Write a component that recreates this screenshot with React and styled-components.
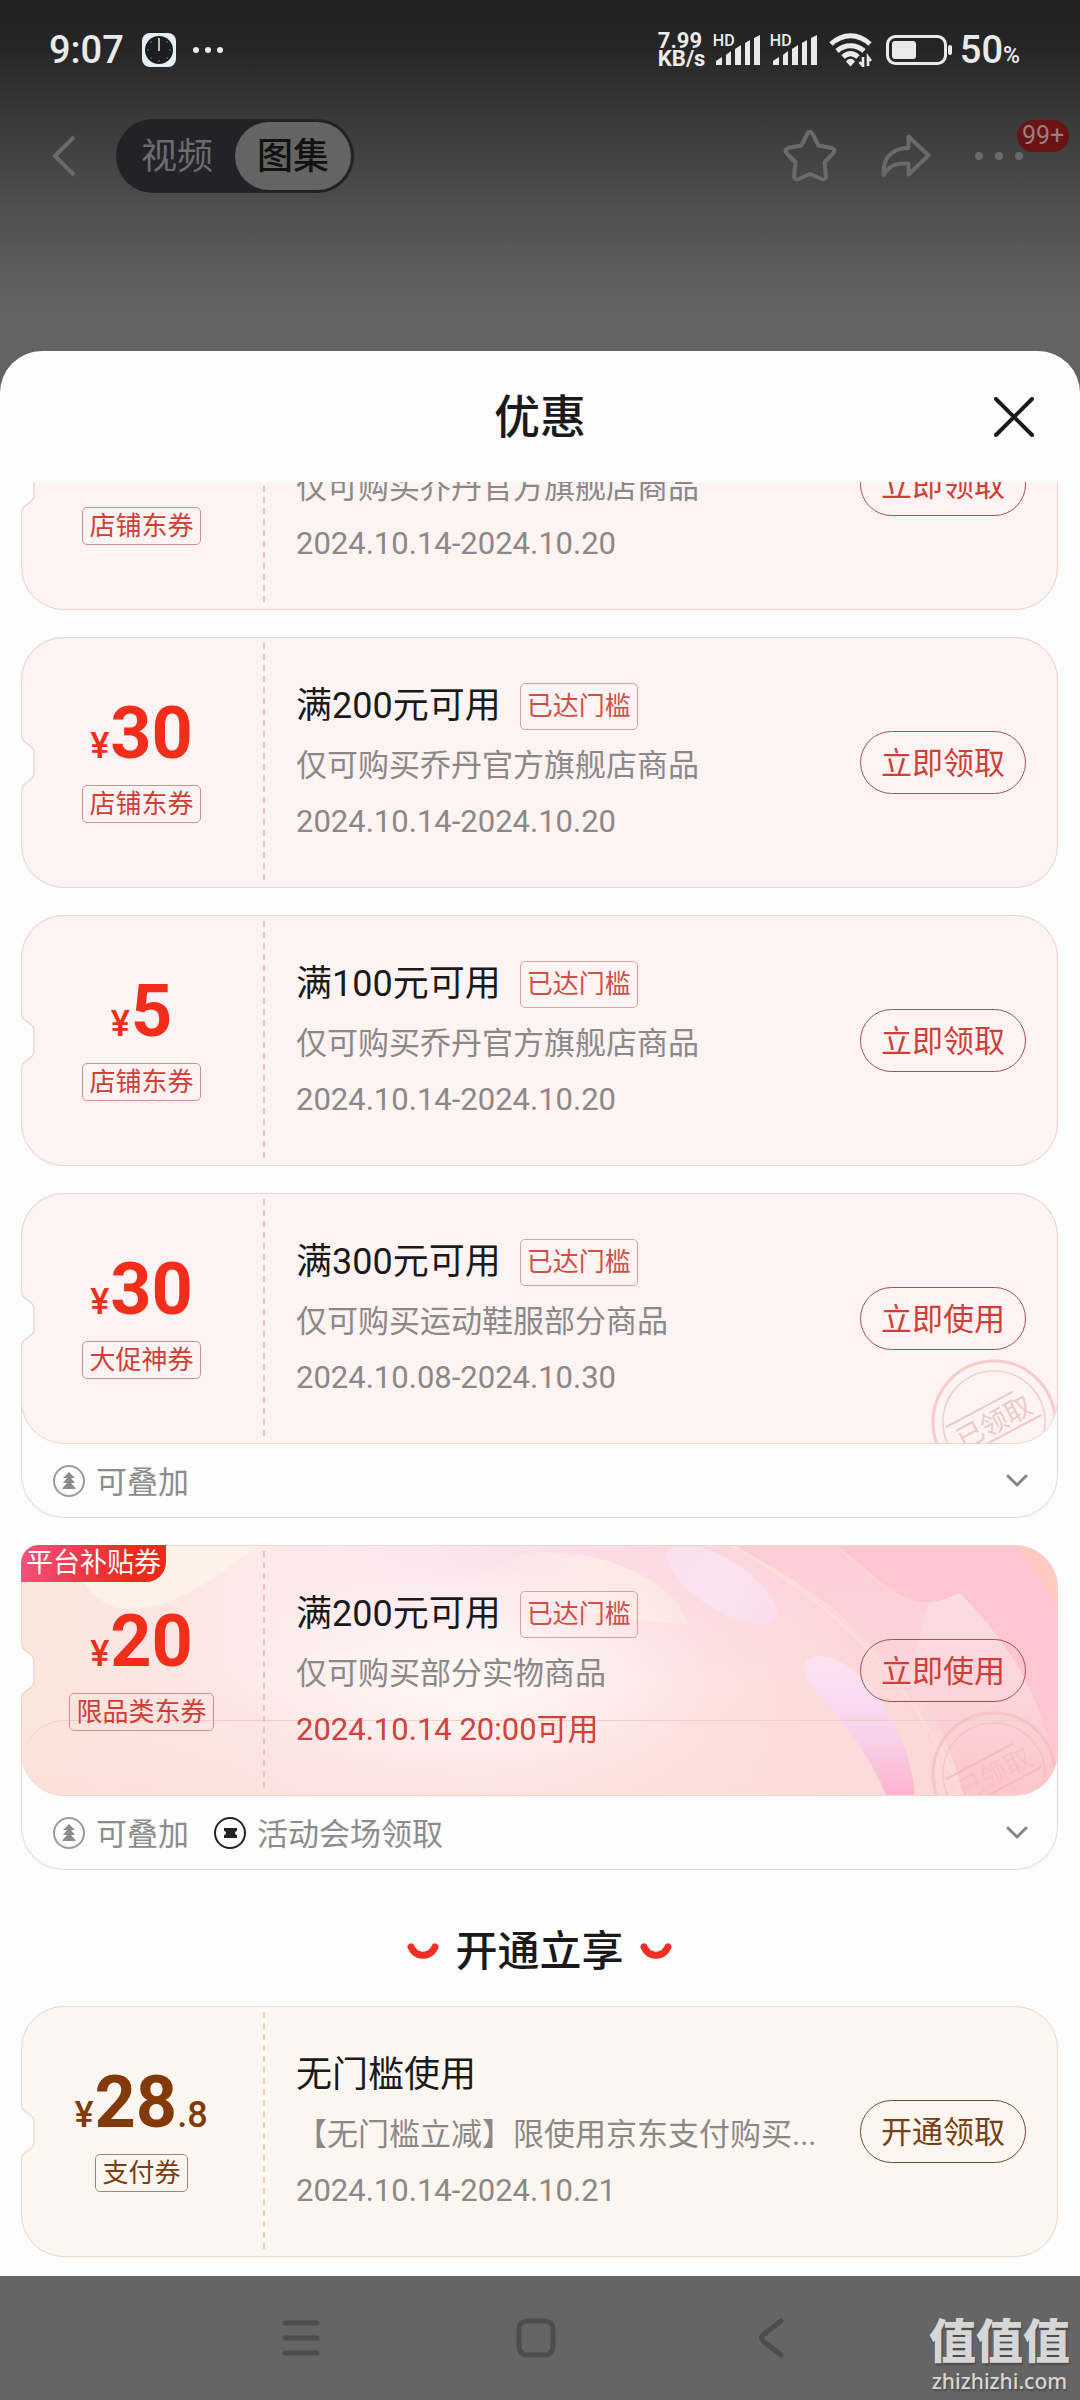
import React, { useLayoutEffect, useRef } from "react";
import styled, { createGlobalStyle } from "styled-components";

const coupons = [
  {
    id: 1,
    amount: "40",
    kind: "店铺东券",
    title: "满300元可用",
    reached: true,
    desc: "仅可购买乔丹官方旗舰店商品",
    date: "2024.10.14-2024.10.20",
    action: "立即领取",
  },
  {
    id: 2,
    amount: "30",
    kind: "店铺东券",
    title: "满200元可用",
    reached: true,
    desc: "仅可购买乔丹官方旗舰店商品",
    date: "2024.10.14-2024.10.20",
    action: "立即领取",
  },
  {
    id: 3,
    amount: "5",
    kind: "店铺东券",
    title: "满100元可用",
    reached: true,
    desc: "仅可购买乔丹官方旗舰店商品",
    date: "2024.10.14-2024.10.20",
    action: "立即领取",
  },
  {
    id: 4,
    amount: "30",
    kind: "大促神券",
    title: "满300元可用",
    reached: true,
    desc: "仅可购买运动鞋服部分商品",
    date: "2024.10.08-2024.10.30",
    action: "立即使用",
    received: true,
    notes: [{ icon: "stack", text: "可叠加" }],
  },
  {
    id: 5,
    amount: "20",
    kind: "限品类东券",
    title: "满200元可用",
    reached: true,
    desc: "仅可购买部分实物商品",
    date: "2024.10.14 20:00可用",
    action: "立即使用",
    received: true,
    ribbon: "平台补贴券",
    notes: [
      { icon: "stack", text: "可叠加" },
      { icon: "ticket", text: "活动会场领取" },
    ],
  },
];

const payCoupon = {
  amount: "28",
  cents: ".8",
  kind: "支付券",
  title: "无门槛使用",
  desc: "【无门槛立减】限使用京东支付购买...",
  date: "2024.10.14-2024.10.21",
  action: "开通领取",
  tone: "brown",
};

const tones = {
  red: {
    bg: "#fdf3f3",
    line: "#ecd6d3",
    dash: "#e9c3bf",
    price: "#f22e1b",
    text: "#cf3f36",
    edge: "#a8504c",
    tagEdge: "#cf8f8b",
  },
  brown: {
    bg: "#fcf6f1",
    line: "#ecdccf",
    dash: "#ecd2b4",
    price: "#843a08",
    text: "#7a3e12",
    edge: "#6f4a33",
    tagEdge: "#a58671",
  },
};

const Signal = () => (
  <svg width="46" height="30" viewBox="0 0 46 30" fill="#eaeaea">
    <path d="M1 30V26L7 22V30Z" />
    <path d="M11 30V20L16 16V30Z" />
    <path d="M20 30V14L26 10V30Z" />
    <path d="M30 30V8L35 5V30Z" />
    <path d="M39 30V3L45 0V30Z" />
  </svg>
);

const Wifi = () => (
  <svg width="44" height="34" viewBox="0 0 44 34" fill="none" stroke="#eaeaea">
    <path d="M2 11C14 0 29 0 41 11" strokeWidth="5" />
    <path d="M8 18C16 11 27 11 35 18" strokeWidth="5" />
    <path d="M14 24C19 19.500 24 19.500 29 24" strokeWidth="5" />
    <path d="M17 28.500a5 5 0 0 1 9 0l-4.500 5z" fill="#eaeaea" stroke="none" />
    <path d="M34 24v9l-3.500-4M39 33v-9l3 4" strokeWidth="2.600" />
  </svg>
);

const Battery = () => (
  <svg width="67" height="30" viewBox="0 0 67 30" fill="none">
    <rect x="1.500" y="1.500" width="58" height="27" rx="8" stroke="#eaeaea" strokeWidth="3" />
    <rect x="6" y="6" width="24" height="18" rx="3" fill="#eaeaea" />
    <rect x="62" y="10" width="4" height="10" rx="2" fill="#eaeaea" />
  </svg>
);

const ClockApp = () => (
  <svg width="34" height="34" viewBox="0 0 34 34">
    <rect width="34" height="34" rx="8" fill="#e6eef7" />
    <circle cx="17" cy="17" r="14" fill="#1d1d1f" />
    <g stroke="#8a8a8a" strokeWidth="1.500" strokeLinecap="round">
      <path d="M17 28v0M28 17v0M6 17v0M9 9v0M25 9v0M9 25v0M25 25v0" />
    </g>
    <path d="M17 5v13" stroke="#b9b9b9" strokeWidth="2" />
  </svg>
);

const Notch = ({ line }) => (
  <svg width="15" height="52" viewBox="0 0 15 52">
    <path
      d="M0 0H1C1 3 2 4 5 6L9 9C12 11 13 13 13 16V36C13 39 12 41 9 43L5 46C2 48 1 49 1 52H0Z"
      fill="#fdfdfd"
    />
    <path
      d="M1 0C1 3 2 4 5 6L9 9C12 11 13 13 13 16V36C13 39 12 41 9 43L5 46C2 48 1 49 1 52"
      fill="none"
      stroke={line}
      strokeWidth="1.500"
    />
  </svg>
);

const Stamp = ({ faint }) => (
  <svg width="126" height="84" viewBox="0 0 126 84" fill="none" opacity={faint ? 0.55 : 1}>
    <circle cx="63" cy="63" r="61" strokeWidth="3" stroke={faint ? "#f3b8ba" : "#f5cdcc"} />
    <circle cx="63" cy="63" r="51" strokeWidth="1.600" stroke={faint ? "#f3b8ba" : "#ecd2cf"} />
    <g transform="rotate(-28 63 63)" stroke={faint ? "#f0b2b4" : "#ecc9c7"}>
      <path d="M18 45H94M18 79H108" strokeWidth="2" />
      <text
        x="63"
        y="73"
        textAnchor="middle"
        fontSize="27"
        fill={faint ? "#f0b2b4" : "#ebcac8"}
        stroke="none"
        opacity={faint ? 0.6 : 1}
      >
        已领取
      </text>
    </g>
  </svg>
);

const Petals = () => (
  <svg viewBox="0 0 1036 251" preserveAspectRatio="none">
    <defs>
      <linearGradient id="base" x1="0" x2="1" y1="0" y2="0">
        <stop offset="0" stopColor="#fbe7dc" />
        <stop offset=".12" stopColor="#fce6e2" />
        <stop offset=".28" stopColor="#fdebec" />
        <stop offset=".45" stopColor="#fdeeee" />
        <stop offset=".7" stopColor="#fde0df" />
        <stop offset="1" stopColor="#fdcdd1" />
      </linearGradient>
      <linearGradient id="floor" x1="0" x2="0" y1="0" y2="1">
        <stop offset=".5" stopColor="#fbdcd6" stopOpacity="0" />
        <stop offset="1" stopColor="#fbdcd8" stopOpacity=".6" />
      </linearGradient>
      <linearGradient id="sky" x1="0" x2="1" y1="0" y2="0">
        <stop offset="0" stopColor="#fce6ef" stopOpacity="0" />
        <stop offset=".3" stopColor="#fce4ee" />
        <stop offset=".6" stopColor="#fcdae3" />
        <stop offset="1" stopColor="#fcd0d8" />
      </linearGradient>
      <linearGradient id="skyFade" x1="0" x2="0" y1="0" y2="1">
        <stop offset="0" stopColor="#fff" />
        <stop offset="1" stopColor="#fff" stopOpacity="0" />
      </linearGradient>
      <mask id="skyMask">
        <rect width="1036" height="140" fill="url(#skyFade)" />
      </mask>
      <linearGradient id="cream" x1="0" x2="1" y1="0" y2="0">
        <stop offset="0" stopColor="#fdf0ea" stopOpacity="0" />
        <stop offset=".6" stopColor="#fdf0e8" />
        <stop offset="1" stopColor="#fdeae4" />
      </linearGradient>
      <linearGradient id="petalTop" x1="0" x2="1" y1="0" y2="0">
        <stop offset="0" stopColor="#fbdfee" />
        <stop offset=".5" stopColor="#fae3f2" />
        <stop offset="1" stopColor="#fbdcec" />
      </linearGradient>
      <linearGradient id="petalLow" x1="0" x2="0" y1="0" y2="1">
        <stop offset="0" stopColor="#fce2ee" />
        <stop offset=".3" stopColor="#f9dcf4" />
        <stop offset=".6" stopColor="#f9d0ea" />
        <stop offset="1" stopColor="#fdb4cd" />
      </linearGradient>
      <linearGradient id="fold" x1="0" x2="0" y1="0" y2="1">
        <stop offset="0" stopColor="#fdcdd6" />
        <stop offset=".6" stopColor="#fcd6db" />
        <stop offset="1" stopColor="#fcd8d4" />
      </linearGradient>
      <linearGradient id="panel" x1="0" x2="0" y1="0" y2="1">
        <stop offset="0" stopColor="#fcdde2" />
        <stop offset=".5" stopColor="#fcd5da" />
        <stop offset="1" stopColor="#fcc6ca" />
      </linearGradient>
      <radialGradient id="glow">
        <stop offset="0" stopColor="#fff9f8" stopOpacity=".85" />
        <stop offset="1" stopColor="#fff9f8" stopOpacity="0" />
      </radialGradient>
    </defs>
    <rect width="1036" height="251" fill="url(#base)" />
    <rect width="1036" height="251" fill="url(#floor)" />
    <path d="M53 20C80 84 140 78 235 0H30Z" fill="#fdf1ea" />
    <path d="M240 0H712C788 45 820 70 843 96V140H240Z" fill="url(#sky)" mask="url(#skyMask)" />
    <path d="M500 8C570 0 650 28 667 79C600 74 500 60 440 40Z" fill="url(#cream)" opacity=".7" />
    <ellipse cx="450" cy="130" rx="240" ry="110" fill="url(#glow)" />
    <path d="M712 0H1036V251H942C900 150 850 70 712 0Z" fill="url(#fold)" />
    <path d="M815 0C850 28 880 62 908 57C925 55 932 50 939 48C985 95 1012 140 1025 190L1036 251V0Z" fill="#fdc6d1" />
    <path d="M908 57C925 55 932 50 939 48C985 95 1012 140 1025 190L1036 251H942C935 215 915 165 884 143Z" fill="url(#panel)" />
    <path d="M994 0C1010 20 1025 40 1036 62V0Z" fill="#fdc9c0" />
    <path d="M712 0C788 45 880 110 942 251" fill="none" stroke="#fddedd" strokeWidth="3" />
    <path d="M815 0C850 28 880 62 908 57" fill="none" stroke="#fdd5d9" strokeWidth="2" />
    <ellipse cx="701" cy="39" rx="64" ry="25" transform="rotate(33 701 39)" fill="url(#petalTop)" />
    <path
      d="M783 119C785 110 800 109 812 113C845 128 870 165 884 205C890 222 893 238 893 251H865C852 220 838 200 826 184C806 158 778 135 783 119Z"
      fill="url(#petalLow)"
    />
  </svg>
);

const StackIcon = () => (
  <svg width="32" height="32" viewBox="0 0 32 32">
    <circle cx="16" cy="16" r="15" fill="none" stroke="#9b9b9b" strokeWidth="2" />
    <path d="M16 7L22 13H18L22 18H18L22.500 23V24H9.500V23L14 18H10L14 13H10Z" fill="#8c8c8c" />
  </svg>
);

const TicketIcon = () => (
  <svg width="32" height="32" viewBox="0 0 32 32">
    <circle cx="16" cy="16" r="15" fill="none" stroke="#222" strokeWidth="2" />
    <path d="M10 11h13v3a2 2 0 0 0 0 4v3H10v-3a2 2 0 0 0 0-4z" fill="#222" />
  </svg>
);

const Chevron = () => (
  <svg width="22" height="14" viewBox="0 0 22 14" fill="none" stroke="#868686" strokeWidth="3">
    <path d="M2 2L11 11L20 2" strokeLinecap="round" strokeLinejoin="round" />
  </svg>
);

const Smile = () => (
  <svg width="32" height="18" viewBox="0 0 32 18" fill="none">
    <path d="M4 4C9 15 23 15 28 4" stroke="#ee2f22" strokeWidth="7" strokeLinecap="round" />
  </svg>
);

const Coupon = ({ data }) => {
  const tone = tones[data.tone || "red"];
  const special = Boolean(data.ribbon);
  return (
    <Card $tone={tone}>
      <Ticket $tone={tone}>
        {special && (
          <Artwork>
            <Petals />
            <Seam />
          </Artwork>
        )}
        {data.received && (
          <StampSpot>
            <Stamp faint={special} />
          </StampSpot>
        )}
        <Stub>
          <Price $tone={tone}>
            <small>¥</small>
            {data.amount}
            {data.cents && <small>{data.cents}</small>}
          </Price>
          <Kind $tone={tone}>{data.kind}</Kind>
        </Stub>
        <Perforation $tone={tone} />
        <Info>
          <TitleRow>
            <h3>{data.title}</h3>
            {data.reached && <Reached>已达门槛</Reached>}
          </TitleRow>
          <Line>{data.desc}</Line>
          <Line $hot={special}>{data.date}</Line>
        </Info>
        <Action type="button" $tone={tone}>
          {data.action}
        </Action>
      </Ticket>
      {data.notes && (
        <Notes>
          {data.notes.map((note) => (
            <Note key={note.text}>
              {note.icon === "stack" ? <StackIcon /> : <TicketIcon />}
              <span>{note.text}</span>
            </Note>
          ))}
          <Expand type="button" aria-label="展开">
            <Chevron />
          </Expand>
        </Notes>
      )}
      <NotchSpot>
        <Notch line={tone.line} />
      </NotchSpot>
      {special && <Ribbon>{data.ribbon}</Ribbon>}
    </Card>
  );
};

const App = () => {
  const list = useRef(null);

  // the sheet opens scrolled down to the last coupon
  useLayoutEffect(() => {
    list.current.scrollTop = list.current.scrollHeight;
  }, []);

  return (
    <Screen>
      <GlobalStyle />
      <Backdrop>
        <StatusBar>
          <Clock>9:07</Clock>
          <ClockApp />
          <StatusDots>
            <i />
            <i />
            <i />
          </StatusDots>
          <StatusRight>
            <Speed>
              <span>7.99</span>
              <span>KB/s</span>
            </Speed>
            <Sim>
              <Signal />
              <em>HD</em>
            </Sim>
            <Sim>
              <Signal />
              <em>HD</em>
            </Sim>
            <Wifi />
            <Power>
              <Battery />
              <Percent>
                50<small>%</small>
              </Percent>
            </Power>
          </StatusRight>
        </StatusBar>
        <TopNav>
          <IconButton type="button" aria-label="返回">
            <svg width="24" height="42" viewBox="0 0 24 42" fill="none" stroke="#6a6a6a" strokeWidth="4">
              <path d="M22 2L3 21L22 40" />
            </svg>
          </IconButton>
          <Toggle>
            <ToggleItem type="button">视频</ToggleItem>
            <ToggleItem type="button" $active>
              图集
            </ToggleItem>
          </Toggle>
          <NavIcons>
            <IconButton type="button" aria-label="收藏">
              <svg width="54" height="52" viewBox="0 0 54 52" fill="none" stroke="#6a6a6a" strokeWidth="4">
                <path
                  d="M24.500 3.500Q27 0 29.500 3.500L35.500 15.500L49 18Q53 19.500 50.500 23L41.500 32.500L43 46.500Q42.500 50.500 38.500 49L27 44L15.500 49Q11.500 50.500 11 46.500L12.500 32.500L3.500 23Q1 19.500 5 18L18.500 15.500Z"
                  strokeLinejoin="round"
                />
              </svg>
            </IconButton>
            <IconButton type="button" aria-label="分享">
              <svg width="50" height="44" viewBox="0 0 50 44" fill="none" stroke="#6a6a6a" strokeWidth="4">
                <path
                  d="M27.500 2.500L47.500 21.500L27.500 40.500V29.500C17 29 9 30 2.500 41C1.500 24 11 14 27.500 14Z"
                  strokeLinejoin="round"
                />
              </svg>
            </IconButton>
            <More type="button" aria-label="更多">
              <i />
              <i />
              <i />
              <Badge>99+</Badge>
            </More>
          </NavIcons>
        </TopNav>
      </Backdrop>

      <Sheet>
        <SheetHeader>
          <h2>优惠</h2>
          <Close type="button" aria-label="关闭">
            <svg width="40" height="40" viewBox="0 0 40 40" stroke="#1a1a1a" strokeWidth="4">
              <path d="M2 2L38 38M38 2L2 38" strokeLinecap="round" />
            </svg>
          </Close>
        </SheetHeader>
        <List ref={list}>
          {coupons.map((c) => (
            <Coupon key={c.id} data={c} />
          ))}
          <Section>
            <Smile />
            <h2>开通立享</h2>
            <Smile />
          </Section>
          <Coupon data={payCoupon} />
        </List>
      </Sheet>

      <SystemNav>
        <IconButton type="button" aria-label="最近任务">
          <svg width="38" height="38" viewBox="0 0 38 38" stroke="#4d4d4d" strokeWidth="5" strokeLinecap="round">
            <path d="M3 4H35M3 19H35M3 34H35" />
          </svg>
        </IconButton>
        <IconButton type="button" aria-label="主页">
          <svg width="40" height="40" viewBox="0 0 40 40" fill="none" stroke="#4d4d4d" strokeWidth="5">
            <rect x="3" y="3" width="34" height="34" rx="8" />
          </svg>
        </IconButton>
        <IconButton type="button" aria-label="后退">
          <svg width="26" height="40" viewBox="0 0 26 40" fill="none" stroke="#4d4d4d" strokeWidth="5">
            <path d="M23 3L5 17Q2 20 5 23L23 37" strokeLinecap="round" />
          </svg>
        </IconButton>
        <Watermark>
          <strong>值值值</strong>
          <span>zhizhizhi.com</span>
        </Watermark>
      </SystemNav>
    </Screen>
  );
};

export default App;

const GlobalStyle = createGlobalStyle`
  * {
    box-sizing: border-box;
  }
  body {
    margin: 0;
    background: #656565;
    font-family: Roboto, "Noto Sans CJK SC", sans-serif;
  }
  button {
    padding: 0;
    border: none;
    background: none;
    font-family: inherit;
    cursor: pointer;
  }
  h2, h3, p {
    margin: 0;
    font-weight: 400;
  }
  svg {
    display: block;
    flex-shrink: 0;
  }
`;

const Screen = styled.div`
  height: 100vh;
  display: flex;
  flex-direction: column;
  background: linear-gradient(#212121 0, #262626 50px, #363636 105px, #4f4f4f 210px, #606060 285px, #636363 310px);
`;

const Backdrop = styled.header`
  height: 351px;
  flex-shrink: 0;
`;

const StatusBar = styled.div`
  height: 100px;
  padding: 0 60px 0 49px;
  display: flex;
  align-items: center;
  color: #eaeaea;
`;

const Clock = styled.span`
  margin-right: 18px;
  font-size: 38px;
  font-weight: 500;
`;

const StatusDots = styled.span`
  margin-left: 17px;
  display: flex;
  gap: 6px;

  i {
    width: 6px;
    height: 6px;
    border-radius: 50%;
    background: #eaeaea;
  }
`;

const StatusRight = styled.div`
  margin-left: auto;
  display: flex;
  align-items: center;
`;

const Speed = styled.div`
  width: 57px;
  display: flex;
  flex-direction: column;
  font-size: 22px;
  font-weight: 700;
  line-height: 18px;
`;

const Sim = styled.div`
  position: relative;
  margin-right: 11px;

  em {
    position: absolute;
    top: -2px;
    left: -2px;
    font-size: 16px;
    font-style: normal;
    font-weight: 500;
    line-height: 16px;
  }
`;

const Power = styled.div`
  margin-left: 13px;
  display: flex;
  align-items: center;
  gap: 7px;
`;

const Percent = styled.span`
  font-size: 38px;
  font-weight: 500;

  small {
    font-size: 23px;
  }
`;

const TopNav = styled.nav`
  height: 112px;
  padding: 0 57px 0 52px;
  display: flex;
  align-items: center;
`;

const IconButton = styled.button`
  display: flex;
  align-items: center;
  justify-content: center;
`;

const Toggle = styled.div`
  height: 74px;
  margin-left: 40px;
  padding: 3px;
  display: flex;
  border-radius: 37px;
  background: #232327;
`;

const ToggleItem = styled.button`
  width: 116px;
  padding-bottom: 6px;
  border-radius: 34px;
  font-size: 36px;
  font-weight: ${(p) => (p.$active ? 500 : 400)};
  color: ${(p) => (p.$active ? "#111" : "#6c6c70")};
  background: ${(p) => (p.$active ? "#646464" : "transparent")};
`;

const NavIcons = styled.div`
  margin-left: auto;
  display: flex;
  align-items: center;
  gap: 44px;
`;

const More = styled.button`
  position: relative;
  display: flex;
  gap: 12px;

  i {
    width: 8px;
    height: 8px;
    border-radius: 50%;
    background: #6a6a6a;
  }
`;

const Badge = styled.span`
  position: absolute;
  left: 42px;
  bottom: 8px;
  padding: 0 5px;
  border-radius: 16px;
  background: #6b1214;
  color: #9c7c7c;
  font-size: 25px;
  line-height: 32px;
`;

const Sheet = styled.main`
  flex: 1;
  min-height: 0;
  display: flex;
  flex-direction: column;
  border-radius: 42px 42px 0 0;
  background: #fdfdfd;
`;

const SheetHeader = styled.div`
  position: relative;
  height: 131px;
  flex-shrink: 0;
  display: flex;
  align-items: center;
  justify-content: center;

  h2 {
    font-size: 46px;
    font-weight: 500;
    line-height: 60px;
    color: #1a1a1a;
  }
`;

const Close = styled.button`
  position: absolute;
  right: 46px;
`;

const List = styled.div`
  flex: 1;
  min-height: 0;
  padding: 0 22px 19px 21px;
  overflow-y: auto;
  scrollbar-width: none;
`;

const Card = styled.article`
  position: relative;
  border-radius: 43px;
  box-shadow: inset 0 0 0 1px ${(p) => p.$tone.line};

  & + & {
    margin-top: 27px;
  }
`;

const Ticket = styled.div`
  position: relative;
  height: 251px;
  padding-right: 31px;
  display: flex;
  overflow: hidden;
  border: 1px solid ${(p) => p.$tone.line};
  border-radius: 43px;
  background: ${(p) => p.$tone.bg};
`;

const Artwork = styled.div`
  position: absolute;
  inset: 0;

  svg {
    width: 100%;
    height: 100%;
  }
`;

const Seam = styled.div`
  position: absolute;
  left: 0;
  right: 0;
  bottom: 0;
  height: 75px;
  border-top: 1px solid #f0cdc9;
  border-radius: 43px 43px 0 0;
`;

const StampSpot = styled.div`
  position: absolute;
  right: 0;
  bottom: 0;
`;

const NotchSpot = styled.div`
  position: absolute;
  top: 100px;
  left: 0;
`;

const Ribbon = styled.span`
  position: absolute;
  top: 0;
  left: 0;
  padding: 0 5px;
  border-radius: 18px 0 20px 0;
  background: linear-gradient(100deg, #f2547f, #f03a4c 40%, #ee2a1c 75%);
  color: #fff;
  font-size: 27px;
  line-height: 37px;
`;

const Stub = styled.div`
  position: relative;
  width: 241px;
  flex-shrink: 0;
  padding: 61px 2px 0 0;
  display: flex;
  flex-direction: column;
  align-items: center;
  gap: 16px;
`;

const Price = styled.div`
  font-size: 72px;
  font-weight: 700;
  line-height: 70px;
  color: ${(p) => p.$tone.price};

  small {
    margin-right: 1px;
    font-size: 36px;
    font-weight: 500;
    line-height: 36px;
  }
`;

const Kind = styled.span`
  padding: 0 6px;
  border: 1px solid ${(p) => p.$tone.tagEdge};
  border-radius: 5px;
  font-size: 26px;
  line-height: 36px;
  color: ${(p) => p.$tone.text};
`;

const Perforation = styled.div`
  position: relative;
  width: 2px;
  flex-shrink: 0;
  margin: 5px 0;
  background: repeating-linear-gradient(${(p) => p.$tone.dash} 0 6px, transparent 6px 11px);
`;

const Info = styled.div`
  position: relative;
  flex: 1;
  min-width: 0;
  padding: 45px 20px 0 31px;
`;

const TitleRow = styled.div`
  margin-bottom: 8px;
  display: flex;
  align-items: center;
  gap: 19px;

  h3 {
    font-size: 36px;
    line-height: 47px;
    color: #1a1a1a;
    white-space: nowrap;
  }
`;

const Reached = styled.span`
  padding: 0 6px;
  border: 1px solid #dba19d;
  border-radius: 5px;
  font-size: 26px;
  line-height: 45px;
  color: #d05048;
`;

const Line = styled.p`
  overflow: hidden;
  text-overflow: ellipsis;
  white-space: nowrap;
  font-size: 31px;
  line-height: 56px;
  color: ${(p) => (p.$hot ? "#d4403a" : "#8c8888")};
`;

const Action = styled.button`
  position: relative;
  width: 166px;
  height: 63px;
  padding-bottom: 5px;
  flex-shrink: 0;
  align-self: center;
  border: 1px solid ${(p) => p.$tone.edge};
  border-radius: 32px;
  font-size: 31px;
  color: ${(p) => p.$tone.text};
`;

const Notes = styled.div`
  height: 74px;
  padding: 0 30px 0 32px;
  display: flex;
  align-items: center;
  gap: 25px;
`;

const Note = styled.span`
  display: flex;
  align-items: center;
  gap: 11px;
  color: #8c8c8c;

  span {
    padding-bottom: 3px;
    font-size: 31px;
  }
`;

const Expand = styled.button`
  margin-left: auto;
`;

const Section = styled.div`
  padding: 52px 0 24px;
  display: flex;
  align-items: center;
  justify-content: center;
  gap: 16px;

  h2 {
    font-size: 42px;
    font-weight: 500;
    line-height: 60px;
    color: #1a1a1a;
  }
`;

const SystemNav = styled.nav`
  position: relative;
  height: 124px;
  flex-shrink: 0;
  padding: 0 192px 0 183px;
  display: grid;
  grid-template-columns: repeat(3, 1fr);
  background: #656565;
`;

const Watermark = styled.div`
  position: absolute;
  right: 10px;
  bottom: 5px;
  display: flex;
  flex-direction: column;
  align-items: center;
  color: #d6d6d6;
  text-shadow: 1px 2px 2px #4a4a4a;

  strong {
    font-size: 47px;
    font-weight: 900;
    line-height: 50px;
  }

  span {
    font-family: "Noto Sans", sans-serif;
    font-size: 21px;
    font-weight: 500;
    line-height: 28px;
  }
`;
